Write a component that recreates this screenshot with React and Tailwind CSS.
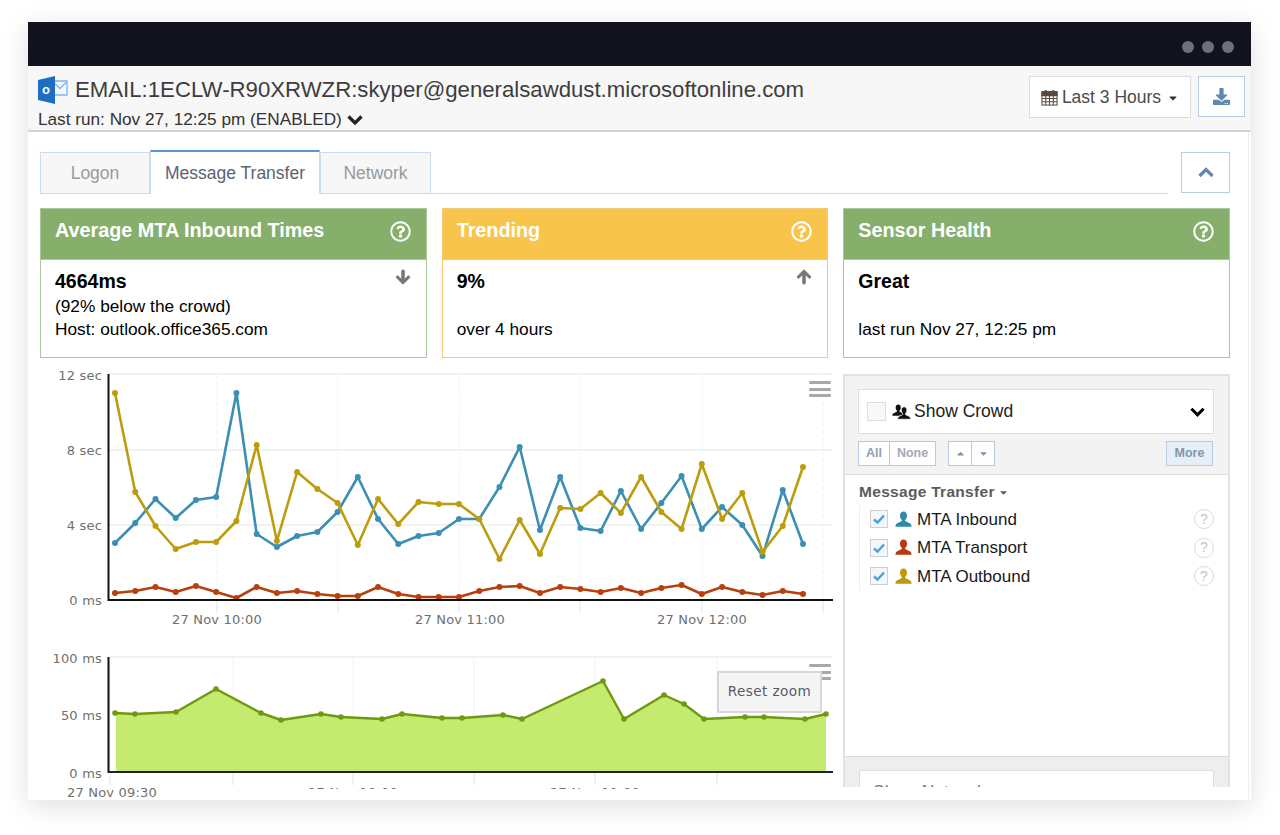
import React from 'react';
import { FaArrowDown, FaArrowUp, FaCaretDown, FaCaretUp, FaDownload, FaRegQuestionCircle } from 'react-icons/fa';

const BLUE = [543, 523, 499, 518, 500, 497, 393, 534, 547, 536, 532, 512, 477, 519, 544, 536, 533, 519, 519, 487, 447, 530, 477, 528, 531, 491, 529, 503, 476, 529, 507, 525, 556, 490, 544];
const GOLD = [393, 492, 526, 549, 542, 542, 521, 445, 541, 472, 489, 503, 545, 499, 524, 502, 504, 504, 519, 559, 520, 554, 508, 509, 493, 513, 477, 512, 529, 464, 519, 493, 552, 526, 467];
const RED = [593, 591, 587, 592, 586, 592, 598, 587, 593, 591, 594, 596, 596, 587, 594, 597, 597, 597, 591, 587, 586, 593, 587, 589, 592, 588, 593, 588, 585, 594, 587, 592, 595, 591, 594];

const AREA = [[115, 713], [135, 714], [176, 712], [216, 689], [261, 713], [281, 720], [321, 714], [341, 717], [382, 719], [402, 714], [442, 718], [462, 718], [503, 715], [522, 719], [603, 681], [624, 719], [664, 695], [684, 704], [704, 719], [745, 717], [764, 717], [805, 719], [826, 714]];

const PERSON = 'M8 .5c2 0 3.300 1.600 3.300 3.700 0 1.600-.6 3.100-1.500 4-.5.5-.4 1.200.2 1.500l3.800 1.800c1 .5 1.700 1.400 1.700 2.500v.9H.5v-.9c0-1.100.7-2 1.700-2.500l3.800-1.800c.6-.3.7-1 .2-1.500-.9-.9-1.500-2.400-1.500-4C4.700 2.100 6 .5 8 .5z';

const toPoints = (ys) => ys.map((y, i) => [115 + i * 20.235, y]);

function Series({ points, color, width = 2.6, r = 3 }) {
  return (
    <g>
      <polyline points={points.map((p) => p.join(',')).join(' ')} fill="none" stroke={color} strokeWidth={width} strokeLinejoin="round" />
      {points.map((p, i) => (
        <circle key={i} cx={p[0]} cy={p[1]} r={r} fill={color} />
      ))}
    </g>
  );
}

function AxisLabel({ x, y, anchor = 'end', children }) {
  return (
    <text x={x} y={y} textAnchor={anchor} fill="#6f6f6f" fontSize="13" letterSpacing="0.2" fontFamily="'DejaVu Sans', sans-serif">
      {children}
    </text>
  );
}

function Hamburger({ ys }) {
  return (
    <g fill="#a8a8a8">
      {ys.map((y) => (
        <rect key={y} x="809" y={y} width="22" height="3" rx="1" />
      ))}
    </g>
  );
}

function Chevron({ up, className }) {
  return (
    <svg viewBox="0 0 16 10" className={className} fill="none" stroke="currentColor" strokeWidth="3.2">
      <path d={up ? 'M1.500 8.500L8 2l6.500 6.500' : 'M1.500 1.500L8 8l6.500-6.500'} />
    </svg>
  );
}

function MainChart() {
  return (
    <svg viewBox="40 366 800 268" className="block w-[800px] h-[268px]">
      {[374, 450, 525].map((y) => (
        <line key={y} x1="109" x2="833" y1={y} y2={y} stroke="#eeeeee" strokeWidth="1.5" />
      ))}
      {[217, 338, 459, 580, 702, 823].map((x) => (
        <g key={x}>
          <line x1={x} x2={x} y1="374" y2="600" stroke="#f0f3fa" strokeDasharray="4 3" />
          <line x1={x} x2={x} y1="600" y2="613" stroke="#dbe4f5" />
        </g>
      ))}
      <AxisLabel x="102" y="380">12 sec</AxisLabel>
      <AxisLabel x="102" y="455">8 sec</AxisLabel>
      <AxisLabel x="102" y="530">4 sec</AxisLabel>
      <AxisLabel x="102" y="605">0 ms</AxisLabel>
      <AxisLabel x="217" y="624" anchor="middle">27 Nov 10:00</AxisLabel>
      <AxisLabel x="460" y="624" anchor="middle">27 Nov 11:00</AxisLabel>
      <AxisLabel x="702" y="624" anchor="middle">27 Nov 12:00</AxisLabel>
      <Series points={toPoints(BLUE)} color="#3b8fb3" />
      <Series points={toPoints(GOLD)} color="#bd9c0e" />
      <Series points={toPoints(RED)} color="#b8400f" />
      <line x1="108.5" x2="108.5" y1="374" y2="601" stroke="#111111" strokeWidth="2" />
      <line x1="108" x2="833" y1="600" y2="600" stroke="#111111" strokeWidth="2" />
      <Hamburger ys={[381, 388, 394]} />
    </svg>
  );
}

function NavigatorChart() {
  const area = `116,771 116,713 ${AREA.slice(1).map((p) => p.join(',')).join(' ')} 826,771`;
  return (
    <svg viewBox="40 634 800 166" className="block w-[800px] h-[166px]">
      <line x1="109" x2="833" y1="657" y2="657" stroke="#eeeeee" strokeWidth="1.5" />
      {[110, 233, 353, 474, 595, 717].map((x) => (
        <g key={x}>
          <line x1={x} x2={x} y1="657" y2="772" stroke="#f0f3fa" />
          <line x1={x} x2={x} y1="772" y2="785" stroke="#dbe4f5" />
        </g>
      ))}
      <polygon points={area} fill="#c4ea70" />
      <Series points={AREA} color="#6f9a10" width="2.4" r="2.8" />
      <line x1="108.5" x2="108.5" y1="657" y2="773" stroke="#111111" strokeWidth="2" />
      <line x1="108" x2="833" y1="772" y2="772" stroke="#222222" strokeWidth="2" />
      <AxisLabel x="102" y="663">100 ms</AxisLabel>
      <AxisLabel x="102" y="720">50 ms</AxisLabel>
      <AxisLabel x="102" y="778">0 ms</AxisLabel>
      <AxisLabel x="67" y="797" anchor="start">27 Nov 09:30</AxisLabel>
      {/* labels that get cut off by the bottom of the window */}
      <svg x="300" y="785" width="420" height="4">
        <AxisLabel x="53" y="12" anchor="middle">27 Nov 10:00</AxisLabel>
        <AxisLabel x="295" y="12" anchor="middle">27 Nov 11:00</AxisLabel>
      </svg>
      <Hamburger ys={[664, 671, 677]} />
    </svg>
  );
}

function StatCard({ title, color, borderColor, lines, arrow }) {
  return (
    <div className="w-[387px] h-[150px] border flex flex-col" style={{ borderColor }}>
      <div className="h-[50px] flex items-center justify-between pl-[14px] pr-[15px] pb-[7px] text-white font-bold text-[19.8px]" style={{ backgroundColor: color }}>
        <span>{title}</span>
        <FaRegQuestionCircle className="w-[21px] h-[21px] mt-[2px]" />
      </div>
      <div className="relative flex-1 pl-[14px] pt-[11px] text-[17.3px] leading-[23.5px] text-black border-t" style={{ borderColor }}>
        <div className="font-bold text-[19.5px] -mt-px pb-[1px]">{lines[0]}</div>
        <div>{lines[1] || '\u00a0'}</div>
        <div>{lines[2]}</div>
        {arrow && <div className="absolute right-[15px] top-[9px] text-[#777777]">{arrow}</div>}
      </div>
    </div>
  );
}

function PersonIcon({ color }) {
  return (
    <svg viewBox="0 0 16 16" className="w-[17px] h-[17px] shrink-0" fill={color}>
      <path d={PERSON} />
    </svg>
  );
}

function CrowdIcon() {
  return (
    <svg viewBox="0 0 22 18" className="w-[19px] h-[16px] shrink-0">
      <path d={PERSON} fill="#111111" transform="scale(0.9)" />
      <path d={PERSON} fill="#111111" stroke="#ffffff" strokeWidth="0.9" transform="translate(6 2.500)" />
    </svg>
  );
}

function MetricRow({ label, color }) {
  return (
    <div className="h-[28.5px] flex items-center pl-[10px] text-[17px] text-[#1a1a1a]">
      <span className="w-[18px] h-[18px] border border-[#cfcfcf] bg-[#f3f6fa] flex items-center justify-center shrink-0">
        <svg viewBox="0 0 14 14" className="w-[14px] h-[14px]" fill="none" stroke="#47a3dc" strokeWidth="2.4">
          <path d="M2 7.500l3.500 3L12 3.500" />
        </svg>
      </span>
      <span className="ml-[7px]">
        <PersonIcon color={color} />
      </span>
      <span className="ml-[5px] flex-1">{label}</span>
      <span className="w-[20px] h-[20px] rounded-full border border-[#dcdcdc] text-[#c4c4c4] text-[14px] flex items-center justify-center mr-[14px]">?</span>
    </div>
  );
}

function SidePanel() {
  const btn = 'h-[25px] border border-[#b5cbe5] flex items-center justify-center text-[12.5px] font-bold';
  return (
    <div className="w-[387px] h-[413px] overflow-hidden">
      <div className="h-[500px] border-2 border-[#e2e2e2] flex flex-col">
        <div className="h-[99px] bg-[#f3f3f3] border-b border-[#dedede] pl-[13px] pr-[14px] pt-[13px]">
          <div className="h-[45px] bg-white border border-[#dddddd] flex items-center pl-[8px] pr-[8px] text-[17.5px] text-[#222222]">
            <span className="w-[19px] h-[19px] border border-[#dddddd] bg-[#f8f8f8]" />
            <span className="ml-[6px]">
              <CrowdIcon />
            </span>
            <span className="ml-[3px] flex-1">Show Crowd</span>
            <Chevron className="w-[15px] h-[10px] text-black" />
          </div>
          <div className="flex mt-[7px]">
            <div className={`${btn} w-[32px] bg-white text-[#8fa0b5]`}>All</div>
            <div className={`${btn} w-[47px] -ml-px bg-white text-[#a3a9b2]`}>None</div>
            <div className={`${btn} w-[24px] ml-[12px] bg-white`}>
              <FaCaretUp className="w-[11px] h-[11px] text-[#7d93ad]" />
            </div>
            <div className={`${btn} w-[24px] -ml-px bg-white`}>
              <FaCaretDown className="w-[11px] h-[11px] text-[#7d93ad]" />
            </div>
            <div className={`${btn} w-[47px] ml-auto mr-[1px] bg-[#e6eff8] text-[#8195ad]`}>More</div>
          </div>
        </div>
        <div className="h-[281px] bg-white pl-[14px] pt-[8px]">
          <div className="flex items-center h-[18px] text-[15.5px] font-bold text-[#5b5b5b] tracking-[0.3px]">
            Message Transfer
            <FaCaretDown className="ml-[3px] w-[11px] h-[11px]" />
          </div>
          <div className="mt-[4px] border-l border-[#eeeeee]">
            <MetricRow label="MTA Inbound" color="#2f89a8" />
            <MetricRow label="MTA Transport" color="#b8380f" />
            <MetricRow label="MTA Outbound" color="#bd9a0c" />
          </div>
        </div>
        <div className="flex-1 bg-[#eeeeee] border-t border-[#dddddd] px-[14px] pt-[13px]">
          <div className="h-[50px] bg-white border border-[#dddddd] flex items-start justify-between pl-[13px] pr-[8px] pt-[8px] text-[17.5px] text-[#777777]">
            Show Network
            <Chevron className="w-[15px] h-[10px] mt-[8px] text-[#999999]" />
          </div>
        </div>
      </div>
    </div>
  );
}

export default function App() {
  return (
    <div className="w-[1280px] h-[835px] bg-white overflow-hidden pl-[28px] pt-[22px]" style={{ fontFamily: "'Liberation Sans', Arial, sans-serif" }}>
      <div className="w-[1223px] h-[778px] bg-white flex flex-col shadow-[0_6px_26px_rgba(0,0,0,0.13)]">
        {/* window bar */}
        <div className="h-[44px] bg-[#12131e] flex items-center justify-end gap-[8px] pr-[17px] pt-[5px] shrink-0">
          <span className="w-[12px] h-[12px] rounded-full bg-[#6b707c]" />
          <span className="w-[12px] h-[12px] rounded-full bg-[#6b707c]" />
          <span className="w-[12px] h-[12px] rounded-full bg-[#6b707c]" />
        </div>

        {/* page header */}
        <div className="h-[66px] bg-[#f7f7f7] border-b-2 border-[#d4d4d4] flex justify-between pl-[10px] pr-[6px] shrink-0">
          <div>
            <div className="flex items-center mt-[10px] h-[28px]">
              <svg viewBox="0 0 30 28" className="w-[30px] h-[28px] shrink-0">
                <path d="M14 5h15v14H14z" fill="#f3f8fd" stroke="#7db6e8" strokeWidth="1.300" />
                <path d="M14.500 5.500L22 12.500l7-7" fill="none" stroke="#7db6e8" strokeWidth="1.300" />
                <path d="M0 4L17 0v28L0 24z" fill="#1f6dc0" />
                <text x="8" y="18" textAnchor="middle" fontSize="13" fontWeight="700" fill="#ffffff" fontFamily="'Liberation Sans', sans-serif">o</text>
              </svg>
              <span className="ml-[7px] text-[22.2px] leading-[28px] text-[#3d3d3d] whitespace-nowrap">EMAIL:1ECLW-R90XRWZR:skyper@generalsawdust.microsoftonline.com</span>
            </div>
            <div className="flex items-center text-[17.2px] leading-[20px] text-[#333333] mt-[5px]">
              Last run: Nov 27, 12:25 pm (ENABLED)
              <Chevron className="ml-[5px] w-[16px] h-[10px] mt-[2px] text-[#222222]" />
            </div>
          </div>
          <div className="flex items-start gap-[7px] pt-[10px]">
            <div className="w-[162px] h-[42px] pt-[1px] bg-white border border-[#dddddd] flex items-center justify-center text-[17.5px] text-[#4a4a4a]">
              <svg viewBox="0 0 18 18" className="w-[17px] h-[17px] mr-[4px]" fill="none" stroke="#5a4a40" strokeWidth="1.100">
                <rect x="1" y="3" width="16" height="14" />
                <path d="M1 3h16v4H1z" fill="#5a4a40" />
                <path d="M1 10h16M1 13.500h16M5 7v10M9 7v10M13 7v10" />
                <path d="M5 1v3M13 1v3" strokeWidth="2" />
              </svg>
              Last 3 Hours
              <FaCaretDown className="ml-[6px] w-[12px] h-[12px] text-[#333333]" />
            </div>
            <div className="w-[47px] h-[41px] bg-white border border-[#b6cde8] flex items-center justify-center">
              <FaDownload className="w-[17px] h-[17px] text-[#5f87b0]" />
            </div>
          </div>
        </div>

        {/* content */}
        <div className="flex-1 min-h-0 mr-[2px] border-r border-[#eeeeee] pl-[12px] pr-[18px] pt-[18px]">
          <div className="flex items-end h-[44px]">
            <div className="w-[110px] h-[42px] bg-[#f7f7f7] border border-[#cddbee] flex items-center justify-center text-[17.5px] text-[#9a9a9a]">Logon</div>
            <div className="w-[170px] h-[44px] bg-white border-x border-[#cddbee] border-t-2 border-t-[#5b96cf] flex items-center justify-center text-[17.5px] text-[#5c6470]">Message Transfer</div>
            <div className="w-[111px] h-[42px] bg-[#f7f7f7] border border-[#cddbee] flex items-center justify-center text-[17.5px] text-[#9a9a9a]">Network</div>
            <div className="w-[737px] border-b border-[#cddbee]" />
            <div className="w-[49px] h-[41px] ml-[13px] mb-[1px] border border-[#b6cde8] flex items-center justify-center">
              <Chevron up className="w-[16px] h-[11px] text-[#5f87b0]" />
            </div>
          </div>

          <div className="flex gap-[15px] mt-[14px]">
            <StatCard
              title="Average MTA Inbound Times"
              color="#86af6c"
              borderColor="#a9c99a"
              lines={['4664ms', '(92% below the crowd)', 'Host: outlook.office365.com']}
              arrow={<FaArrowDown className="w-[16px] h-[16px]" stroke="currentColor" strokeWidth="30" />}
            />
            <StatCard
              title="Trending"
              color="#f9c44c"
              borderColor="#f3cb78"
              lines={['9%', '', 'over 4 hours']}
              arrow={<FaArrowUp className="w-[16px] h-[16px]" stroke="currentColor" strokeWidth="30" />}
            />
            <StatCard title="Sensor Health" color="#86af6c" borderColor="#a9c99a" lines={['Great', '', 'last run Nov 27, 12:25 pm']} />
          </div>

          <div className="flex gap-[3px] mt-[8px]">
            <div className="w-[800px] relative">
              <MainChart />
              <NavigatorChart />
              <div className="absolute left-[677px] top-[305px] w-[105px] h-[42px] pb-[2px] bg-[#f5f5f5] border-2 border-[#d8d8d8] flex items-center justify-center text-[13.6px] tracking-[0.4px] text-[#555b66]" style={{ fontFamily: "'DejaVu Sans', sans-serif" }}>
                Reset zoom
              </div>
            </div>
            <div className="mt-[8px]">
              <SidePanel />
            </div>
          </div>
        </div>
      </div>
    </div>
  );
}
